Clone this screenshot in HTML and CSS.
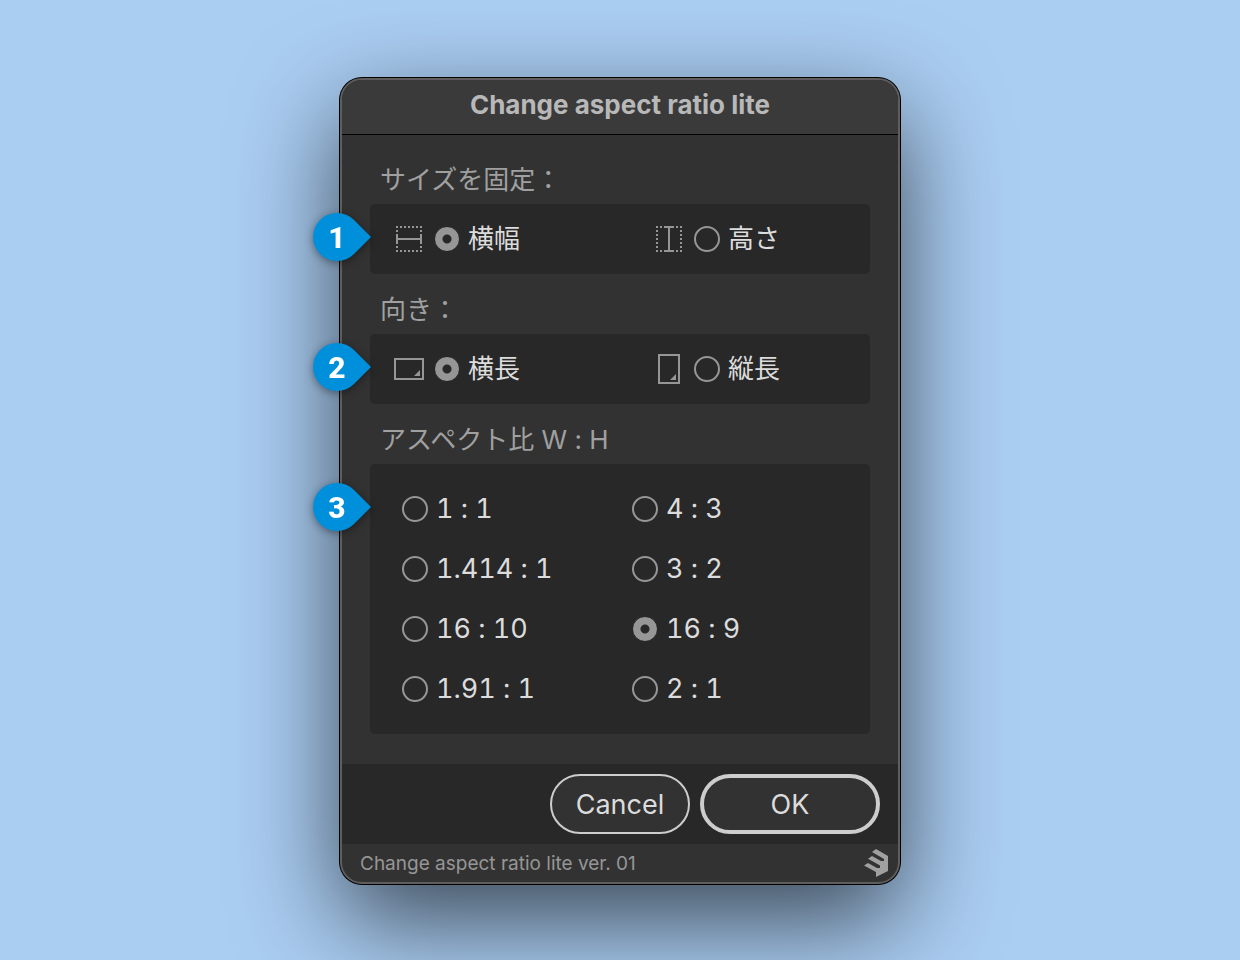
FILE: index.html
```html
<!DOCTYPE html>
<html lang="ja">
<head>
    <meta charset="UTF-8">
    <meta name="viewport" content="width=device-width, initial-scale=1.0">
    <title>Change aspect ratio lite</title>
    <link rel="stylesheet" href="styles.css">
</head>
<body>
<form class="dialog">
    <h1 class="title">Change aspect ratio lite</h1>

    <div class="content">
        <h2 class="label" id="fix-label">サイズを固定：</h2>
        <div class="panel options" role="radiogroup" aria-labelledby="fix-label">
            <span class="pin">
                <svg viewBox="0 0 58 48"><path d="M41 7L58 24L41 41A24 24 0 1 1 41 7Z"/></svg>
                <b>1</b>
            </span>
            <label class="option">
                <svg class="icon" viewBox="0 0 30 30">
                    <path class="dots" d="M2 3H28M2 27H28M3 6V10M27 6V10M3 22V26M27 22V26"/>
                    <path d="M3 10V20M27 10V20M3 15H27"/>
                </svg>
                <input type="radio" name="fix" checked>
                <span>横幅</span>
            </label>
            <label class="option">
                <svg class="icon" viewBox="0 0 30 30">
                    <path class="dots" d="M3 2V28M27 2V28M6 3H10M6 27H10M22 3H26M22 27H26"/>
                    <path d="M10 3H20M10 27H20M15 3V27"/>
                </svg>
                <input type="radio" name="fix">
                <span>高さ</span>
            </label>
        </div>

        <h2 class="label" id="direction-label">向き：</h2>
        <div class="panel options" role="radiogroup" aria-labelledby="direction-label">
            <span class="pin">
                <svg viewBox="0 0 58 48"><path d="M41 7L58 24L41 41A24 24 0 1 1 41 7Z"/></svg>
                <b>2</b>
            </span>
            <label class="option">
                <svg class="icon" viewBox="0 0 30 30">
                    <path d="M1 5H29V25H1Z"/>
                    <path class="corner" d="M26 16V22H20Z"/>
                </svg>
                <input type="radio" name="direction" checked>
                <span>横長</span>
            </label>
            <label class="option">
                <svg class="icon" viewBox="0 0 30 30">
                    <path d="M5 1H25V29H5Z"/>
                    <path class="corner" d="M22 20V26H16Z"/>
                </svg>
                <input type="radio" name="direction">
                <span>縦長</span>
            </label>
        </div>

        <h2 class="label" id="ratio-label">アスペクト比 W : H</h2>
        <div class="panel ratios" role="radiogroup" aria-labelledby="ratio-label">
            <span class="pin">
                <svg viewBox="0 0 58 48"><path d="M41 7L58 24L41 41A24 24 0 1 1 41 7Z"/></svg>
                <b>3</b>
            </span>
            <label class="option"><input type="radio" name="ratio"><span>1 : 1</span></label>
            <label class="option"><input type="radio" name="ratio"><span>4 : 3</span></label>
            <label class="option"><input type="radio" name="ratio"><span>1.414 : 1</span></label>
            <label class="option"><input type="radio" name="ratio"><span>3 : 2</span></label>
            <label class="option"><input type="radio" name="ratio"><span>16 : 10</span></label>
            <label class="option"><input type="radio" name="ratio" checked><span>16 : 9</span></label>
            <label class="option"><input type="radio" name="ratio"><span>1.91 : 1</span></label>
            <label class="option"><input type="radio" name="ratio"><span>2 : 1</span></label>
        </div>
    </div>

    <div class="actions">
        <button type="button" class="cancel">Cancel</button>
        <button type="submit" class="ok">OK</button>
    </div>

    <div class="status">
        <span>Change aspect ratio lite ver. 01</span>
        <svg class="logo" viewBox="0 0 24 28">
            <path d="M8 3L12 0L24 7V22L12 28V23L0 16.5L4 14L13 19H16V16.5L4 9.7L8 7L17 12H20V10Z"/>
        </svg>
    </div>
</form>
</body>
</html>
```
FILE: styles.css
```css
* {
    box-sizing: border-box;
}
body {
    margin: 0;
    min-height: 100vh;
    padding: 78px 20px;
    background-color: #aacdf2;
    font-family: Inter, "Noto Sans CJK JP", sans-serif;
    font-variant-ligatures: no-contextual;
}
.dialog {
    max-width: 560px;
    margin: 0 auto;
    background-color: #323232;
    border: 2px solid #5e5e5e;
    border-radius: 22px;
    box-shadow: 0 0 0 1px #000, 0 36px 100px rgba(0,0,0,0.66);
}
.title {
    margin: 0;
    padding-bottom: 4px;
    background-color: #3a3a3a;
    border-bottom: 1px solid #000;
    border-radius: 20px 20px 0 0;
    color: #b8b8b8;
    font-size: 26px;
    line-height: 50px;
    text-align: center;
}
.content {
    padding: 9px 28px 30px;
}
.label {
    margin: 12px 0 0;
    padding-left: 10px;
    color: #a0a0a0;
    font-size: 26px;
    font-weight: 400;
    line-height: 48px;
}
.panel {
    position: relative;
    display: grid;
    background-color: #282828;
    border-radius: 5px;
}
.options {
    grid-template-columns: 260px 1fr;
    padding: 5px 24px;
}
.ratios {
    grid-template-columns: 230px 1fr;
    padding: 15px 32px;
}
.option {
    display: flex;
    align-items: center;
    gap: 8px;
    color: #dcdcdc;
    font-size: 26px;
    line-height: 60px;
}
.ratios .option {
    font-size: 27px;
    font-variant-numeric: tabular-nums;
}
.icon {
    width: 30px;
    height: 30px;
    margin-right: 2px;
    fill: none;
    stroke: #969696;
    stroke-width: 2;
}
.icon .dots {
    stroke-dasharray: 2 2;
}
.icon .corner {
    fill: #969696;
    stroke: none;
}
input[type="radio"] {
    appearance: none;
    width: 26px;
    height: 26px;
    margin: 0;
    border: 2px solid #969696;
    border-radius: 50%;
}
input[type="radio"]:checked {
    background: radial-gradient(circle, #282828 4px, #969696 5px);
    border: 1px solid #282828;
}
.pin {
    position: absolute;
    top: 9px;
    left: -57px;
    width: 58px;
    height: 48px;
    filter: drop-shadow(0 2px 4px rgba(0,0,0,0.4));
}
.ratios .pin {
    top: 19px;
}
.pin svg {
    display: block;
    fill: #008fdb;
}
.pin b {
    position: absolute;
    top: 0;
    left: 0;
    width: 48px;
    color: #fff;
    font-family: Roboto, sans-serif;
    font-size: 30px;
    font-weight: 800;
    line-height: 50px;
    text-align: center;
}
.actions {
    display: flex;
    justify-content: flex-end;
    gap: 10px;
    padding: 10px 18px;
    background-color: #282828;
}
button {
    height: 60px;
    background-color: #323232;
    border: 2px solid #cdcdcd;
    border-radius: 30px;
    color: #dcdcdc;
    font-family: inherit;
    font-size: 27px;
    cursor: pointer;
}
.cancel {
    width: 140px;
    padding: 0;
}
.ok {
    width: 180px;
    border-width: 4px;
}
.status {
    display: flex;
    align-items: center;
    justify-content: space-between;
    height: 38px;
    padding: 0 10px 0 18px;
    color: #969696;
    font-size: 19px;
}
.logo {
    width: 24px;
    height: 28px;
    fill: #a0a0a0;
}
```
